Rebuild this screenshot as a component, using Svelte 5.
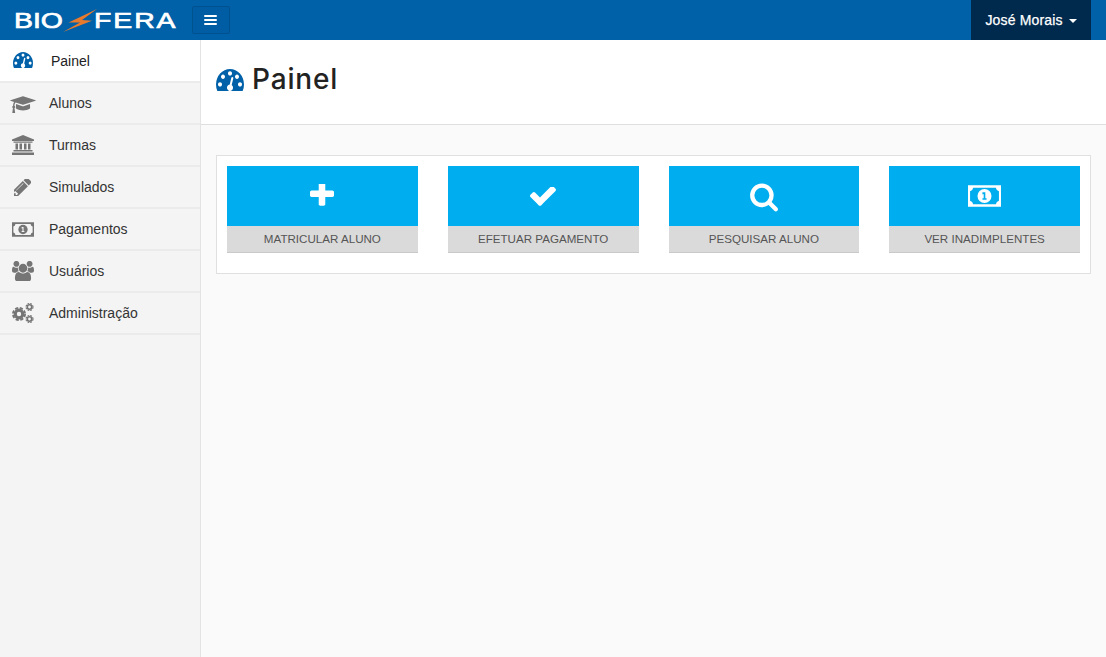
<script>
  const gauge = "M384 1152q0-53-37.500-90.500t-90.500-37.500-90.500 37.500-37.500 90.500 37.500 90.500 90.500 37.500 90.500-37.500 37.500-90.500zm192-448q0-53-37.500-90.500t-90.500-37.500-90.500 37.500-37.500 90.500 37.500 90.500 90.500 37.500 90.500-37.500 37.500-90.500zm428 481l101-382q6-26-7.500-48.500t-38.500-29.500-48 6.500-30 39.500l-101 382q-60 5-107 43.500t-63 98.500q-20 77 20 146t117 89 146-20 89-117q16-60-6-117t-72-91zm660-33q0-53-37.500-90.500t-90.500-37.500-90.500 37.500-37.500 90.500 37.500 90.500 90.500 37.500 90.500-37.500 37.500-90.500zm-640-640q0-53-37.500-90.500t-90.500-37.500-90.500 37.500-37.500 90.500 37.500 90.500 90.500 37.500 90.500-37.500 37.500-90.500zm448 192q0-53-37.500-90.500t-90.500-37.500-90.500 37.500-37.500 90.500 37.500 90.500 90.500 37.500 90.500-37.500 37.500-90.500zm320 448q0 261-141 483-19 29-54 29h-1402q-35 0-54-29-141-221-141-483 0-182 71-348t191-286 286-191 348-71 348 71 286 191 191 286 71 348z";
  const menu = [
    { label: "Alunos", icon: "cap" },
    { label: "Turmas", icon: "bank" },
    { label: "Simulados", icon: "pencil" },
    { label: "Pagamentos", icon: "money" },
    { label: "Usuários", icon: "users" },
    { label: "Administração", icon: "cogs" }
  ];
  const tiles = [
    { label: "Matricular aluno", icon: "plus" },
    { label: "Efetuar pagamento", icon: "check" },
    { label: "Pesquisar aluno", icon: "search" },
    { label: "Ver inadimplentes", icon: "money" }
  ];
</script>

{#snippet money(cls)}
  <svg class={cls} viewBox="0 0 32 21">
    <path fill-rule="evenodd" d="M0 0H32V21H0ZM5 2.500Q4.500 5.500 2 6V15Q4.500 15.500 5 18.500H27Q27.500 15.500 30 15V6Q27.500 5.500 27 2.500Z" />
    <circle cx="16" cy="10.500" r="6.800" />
    <path class="one" d="M14 6.800H16.800V12.700H18V14.100H14V12.700H15.200V8.500L14 9.100Z" />
  </svg>
{/snippet}

{#snippet icon(name)}
  {#if name === "cap"}
    <svg class="ni cap" viewBox="0 -160 2304 1792"><path d="M1774 836l18 316q4 69-82 128t-235 93.500-323 34.500-323-34.500-235-93.500-82-128l18-316 574 181q22 7 48 7t48-7zm530-324q0 23-22 31l-1120 352q-4 1-10 1t-10-1l-652-206q-43 34-71 111.500t-34 178.500q63 36 63 109 0 69-58 107l58 433q2 14-8 25-9 11-24 11h-192q-15 0-24-11-10-11-8-25l58-433q-58-38-58-107 0-73 65-111 11-207 98-330l-333-104q-22-8-22-31t22-31l1120-352q4-1 10-1t10 1l1120 352q22 8 22 31z" /></svg>
  {:else if name === "bank"}
    <svg class="ni bank" viewBox="0 0 22 20">
      <path d="M11 0L22 4.500V6H0V4.500Z" />
      <path d="M1.500 6.500H20.500V7.800H1.500ZM3.500 8.500H6V14.500H3.500ZM7.500 8.500H10V14.500H7.500ZM12 8.500H14.500V14.500H12ZM16 8.500H18.500V14.500H16ZM1.500 15H20.500V16.500H1.500ZM0 17.500H22V20H0Z" />
    </svg>
  {:else if name === "pencil"}
    <svg class="ni pencil" viewBox="200 200 1400 1400"><path d="M491 1536l91-91-235-235-91 91v107h128v128h107zm523-928q0-22-22-22-10 0-17 7l-542 542q-7 7-7 17 0 22 22 22 10 0 17-7l542-542q7-7 7-17zm-54-192l416 416-832 832h-416v-416zm683 96q0 53-37 90l-166 166-416-416 166-165q36-38 90-38 53 0 91 38l235 234q37 39 37 91z" transform="translate(-55 -55) scale(1.02)" /></svg>
  {:else if name === "money"}
    {@render money("ni money")}
  {:else if name === "users"}
    <svg class="ni users" viewBox="0 130 1920 1500"><path d="M593 896q-162 5-265 128h-134q-82 0-138-40.500t-56-118.500q0-353 124-353 6 0 43.500 21t97.500 42.500 119 21.500q67 0 133-23-5 37-5 66 0 139 81 256zm1071 637q0 120-73 189.500t-194 69.500h-874q-121 0-194-69.500t-73-189.500q0-53 3.500-103.500t14-109 26.500-108.500 43-97.500 62-81 85.500-53.500 111.500-20q10 0 43 21.500t73 48 107 48 135 21.500 135-21.500 107-48 73-48 43-21.500q61 0 111.500 20t85.500 53.500 62 81 43 97.500 26.500 108.500 14 109 3.500 103.500zm-1024-1277q0 106-75 181t-181 75-181-75-75-181 75-181 181-75 181 75 75 181zm704 384q0 159-112.500 271.500t-271.500 112.500-271.500-112.500-112.500-271.500 112.500-271.500 271.500-112.500 271.500 112.500 112.500 271.500zm576 225q0 78-56 118.500t-138 40.500h-134q-103-123-265-128 81-117 81-256 0-29-5-66 66 23 133 23 59 0 119-21.500t97.500-42.500 43.500-21q124 0 124 353zm-128-609q0 106-75 181t-181 75-181-75-75-181 75-181 181-75 181 75 75 181z" /></svg>
  {:else if name === "cogs"}
    <svg class="ni cogs" viewBox="0 0 22 20">
      <circle cx="7" cy="11" r="3.800" class="ring" />
      <circle cx="7" cy="11" r="6.100" class="teeth big" />
      <circle cx="17.500" cy="4" r="2.200" class="ring small" />
      <circle cx="17.500" cy="4" r="3.500" class="teeth tiny" />
      <circle cx="17.500" cy="16" r="2.200" class="ring small" />
      <circle cx="17.500" cy="16" r="3.500" class="teeth tiny" />
    </svg>
  {:else if name === "plus"}
    <svg class="ti plus" viewBox="192 256 1408 1408"><path d="M1600 736v192q0 40-28 68t-68 28h-416v416q0 40-28 68t-68 28h-192q-40 0-68-28t-28-68v-416h-416q-40 0-68-28t-28-68v-192q0-40 28-68t68-28h416v-416q0-40 28-68t68-28h192q40 0 68 28t28 68v416h416q40 0 68 28t28 68z" /></svg>
  {:else if name === "check"}
    <svg class="ti check" viewBox="121 402 1550 1182"><path d="M1671 566q0 40-28 68l-724 724-136 136q-28 28-68 28t-68-28l-136-136-362-362q-28-28-28-68t28-68l136-136q28-28 68-28t68 28l294 295 656-657q28-28 68-28t68 28l136 136q28 28 28 68z" /></svg>
  {:else if name === "search"}
    <svg class="ti search" viewBox="0 128 1728 1664"><path d="M1216 832q0-185-131.500-316.500t-316.500-131.500-316.500 131.500-131.500 316.500 131.500 316.500 316.500 131.500 316.500-131.500 131.500-316.500zm512 832q0 52-38 90t-90 38q-54 0-90-38l-343-342q-179 124-399 124-143 0-273.500-55.500t-225-150-150-225-55.500-273.500 55.500-273.500 150-225 225-150 273.500-55.500 273.500 55.500 225 150 150 225 55.500 273.500q0 220-124 399l343 343q37 37 37 90z" /></svg>
  {/if}
{/snippet}

<div class="page">
  <header class="top">
    <div class="logo">
      <span class="lw bio">BIO</span>
      <svg class="bolt" viewBox="0 0 34 23"><path d="M34 0L5.600 13.600H17L0 23L29 11.700L19 11Z" /></svg>
      <span class="lw fera">FERA</span>
    </div>
    <button class="burger" aria-label="Menu"><span></span><span></span><span></span></button>
    <div class="user">José Morais <i class="caret"></i></div>
  </header>
  <div class="body">
    <nav class="side">
      <a class="item active">
        <svg class="gauge small" viewBox="0 256 1792 1280" preserveAspectRatio="none"><path d={gauge} /></svg>
        <span>Painel</span>
      </a>
      {#each menu as m}
        <a class="item">
          <span class="slot">{@render icon(m.icon)}</span>
          <span>{m.label}</span>
        </a>
      {/each}
    </nav>
    <main class="main">
      <div class="head">
        <svg class="gauge big" viewBox="0 256 1792 1280" preserveAspectRatio="none"><path d={gauge} /></svg>
        <h1>Painel</h1>
      </div>
      <section class="card">
        {#each tiles as t}
          <div class="tile">
            <div class="face">{@render icon(t.icon)}</div>
            <div class="cap-label">{t.label}</div>
          </div>
        {/each}
      </section>
    </main>
  </div>
</div>

<style>
  :global(body) { margin: 0; background: #fafafa; font-family: "Liberation Sans", Arial, sans-serif; }
  .page { height: 657px; display: flex; flex-direction: column; overflow: hidden; }
  .top { height: 40px; flex: none; background: #0061a9; display: flex; align-items: center; padding: 0 15px 0 14px; box-sizing: border-box; }
  .logo { width: 178px; height: 40px; display: flex; align-items: center; color: #fff; flex: none; }
  .lw { display: block; flex: none; font-family: "Liberation Sans", sans-serif; font-size: 22px; line-height: 40px; margin-top: 1px; -webkit-text-stroke: 0.7px #fff; transform: scaleX(1.29); transform-origin: left center; white-space: nowrap; }
  .bio { width: 49px; }
  .fera { width: 82px; letter-spacing: 1.5px; }
  .bolt { width: 34px; height: 23px; fill: #e87a2d; margin: 1px -3px 0 0; flex: none; }
  .burger { width: 38px; height: 28px; margin-top: -1px; background: #005ca3; border: 1px solid #00528f; border-radius: 2px; padding: 0 1px 0 0; display: flex; flex-direction: column; align-items: center; justify-content: center; gap: 2px; }
  .burger span { width: 13px; height: 2px; background: #fff; border-radius: 1px; }
  .user { margin-left: auto; width: 120px; height: 40px; background: #002a4d; color: #fff; font-size: 14px; letter-spacing: 0.15px; -webkit-text-stroke: 0.25px #fff; display: flex; align-items: center; justify-content: center; gap: 6px; box-sizing: border-box; }
  .caret { width: 0; height: 0; border-left: 4px solid transparent; border-right: 4px solid transparent; border-top: 4px solid #fff; margin-top: 1px; }
  .body { flex: 1; display: flex; min-height: 0; }
  .side { width: 201px; flex: none; box-sizing: border-box; background: #f4f4f4; border-right: 1px solid #e3e3e3; }
  .item { height: 42px; box-sizing: border-box; border-bottom: 2px solid #ebebeb; display: flex; align-items: center; font-size: 14px; color: #333; }
  .slot { width: 49px; display: flex; justify-content: center; padding-right: 3px; box-sizing: border-box; }
  .item.active { height: 43px; background: #fff; color: #222; }
  .item.active .gauge { margin-left: 13px; margin-right: 18px; margin-top: -1px; }
  .gauge { fill: #0061a9; display: block; }
  .gauge.small { width: 20px; height: 16px; }
  .gauge.big { width: 28px; height: 22px; flex: none; }
  .ni { fill: #757575; display: block; }
  .ni.cap { width: 26px; height: 20px; }
  .ni.bank { width: 22px; height: 20px; margin-left: -1px; }
  .ni.pencil { width: 17px; height: 17px; margin-left: -1px; }
  .ni.money { width: 22px; height: 15px; }
  .ni.users { width: 22px; height: 20px; }
  .ni.cogs { width: 22px; height: 20px; }
  .ni .one { fill: #f4f4f4; }
  .ring { fill: none; stroke: #757575; stroke-width: 3.200; }
  .ring.small { stroke-width: 1.600; }
  .teeth { fill: none; stroke: #757575; }
  .teeth.big { stroke-width: 1.800; stroke-dasharray: 3.200 1.600; }
  .teeth.tiny { stroke-width: 1.100; stroke-dasharray: 1.800 1.000; }
  .main { flex: 1; min-width: 0; display: flex; flex-direction: column; }
  .head { height: 85px; flex: none; box-sizing: border-box; background: #fff; border-bottom: 1px solid #dfdfdf; display: flex; align-items: flex-start; gap: 8px; padding: 29px 0 0 15px; }
  h1 { margin: -7px 0 0; font-family: Inter, sans-serif; font-size: 28px; line-height: 34px; font-weight: 500; color: #222; letter-spacing: 0.85px; }
  .card { margin: 30px 15px 0; height: 119px; box-sizing: border-box; background: #fff; border: 1px solid #e0e0e0; padding: 10px; display: grid; grid-template-columns: repeat(4, 1fr); gap: 30px; align-items: start; }
  .face { height: 60px; background: #00aeef; display: flex; align-items: center; justify-content: center; }
  .ti { fill: #fff; display: block; }
  .ti.plus { width: 24px; height: 24px; margin-top: -1px; }
  .ti.check { width: 26px; height: 20px; margin-top: 2px; }
  .ti.search { width: 29px; height: 29px; margin-top: 3px; margin-right: 1px; }
  .face :global(.ni.money) { fill: #fff; width: 33px; height: 22px; }
  .face :global(.ni.money .one) { fill: #00aeef; }
  .cap-label { height: 27px; box-sizing: border-box; background: #dadada; border-bottom: 1px solid #c9c9c9; color: #555; font-size: 11.6px; line-height: 26px; text-align: center; text-transform: uppercase; }
</style>
